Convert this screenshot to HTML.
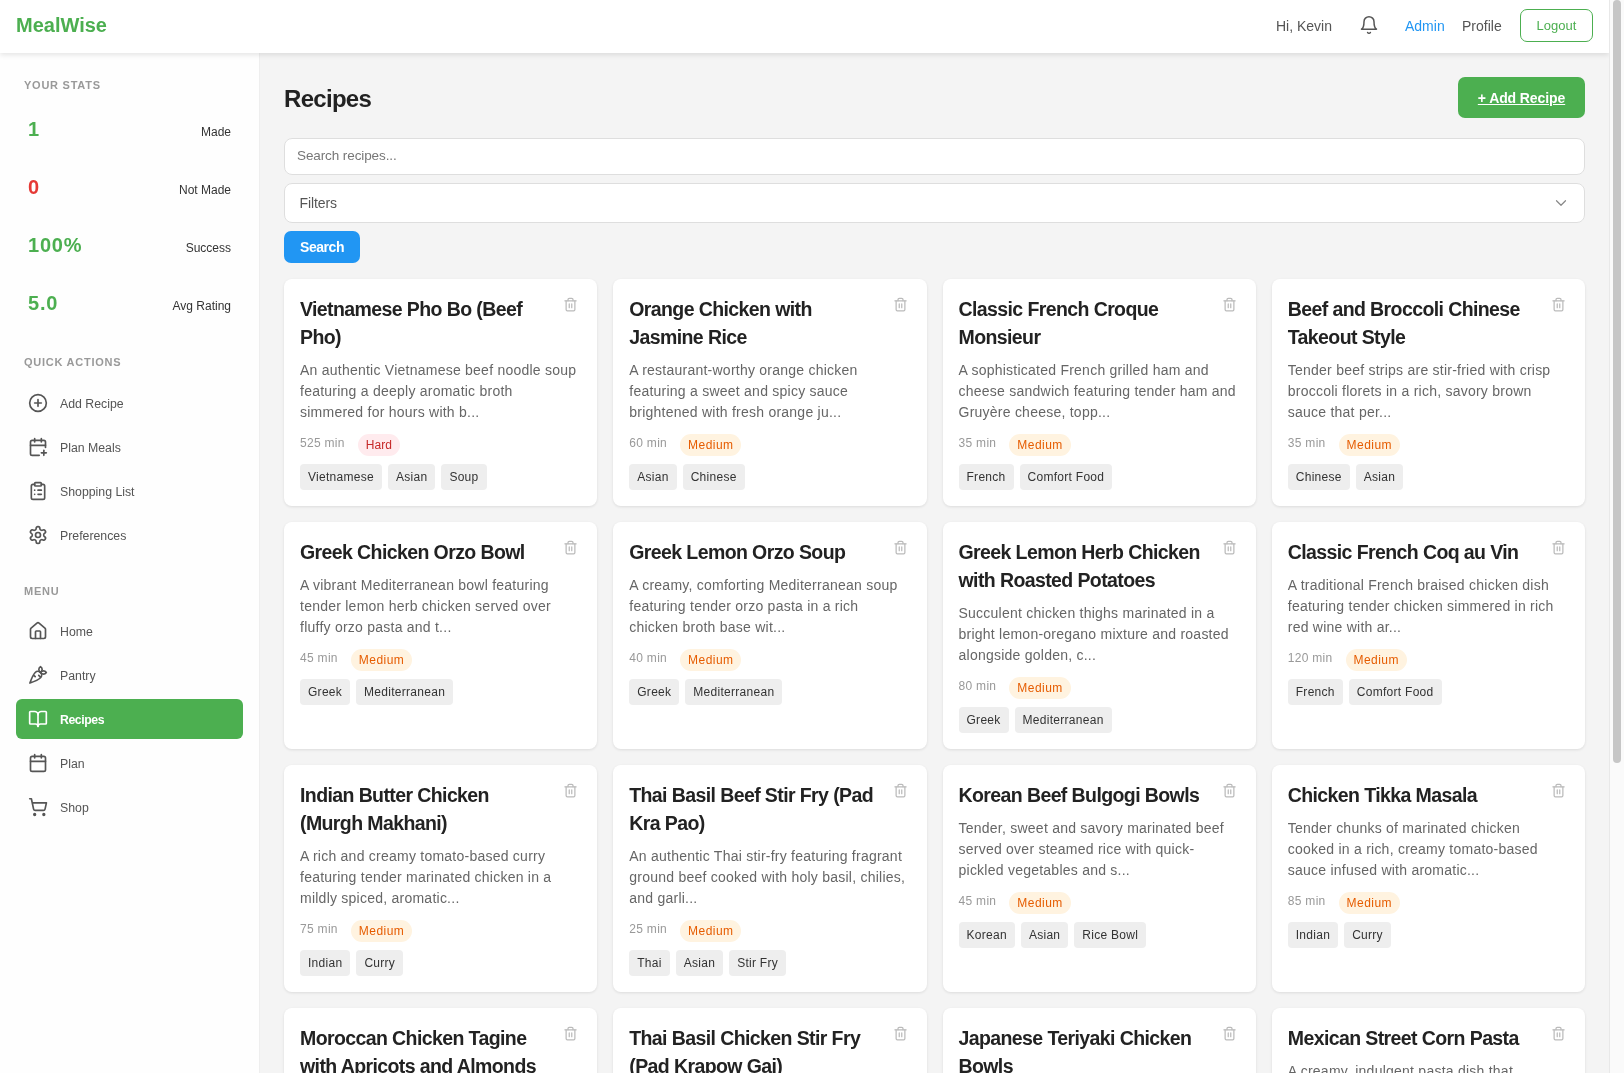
<!DOCTYPE html>
<html><head><meta charset="utf-8"><title>MealWise</title>
<style>
*{box-sizing:border-box;margin:0;padding:0}
html,body{width:1624px;height:1073px;overflow:hidden}
body{font-family:"Liberation Sans",sans-serif;background:#f4f4f4;color:#222;position:relative}
svg{display:block}
.root{position:absolute;left:0;top:0;width:1624px;height:1073px;overflow:hidden;will-change:transform}
.hdr{position:absolute;left:0;top:0;width:1609px;height:53px;background:#fff;box-shadow:0 2px 5px rgba(0,0,0,.1);z-index:5}
.logo{position:absolute;left:16px;top:13px;font-size:20px;line-height:24px;font-weight:700;color:#4caf50}
.ht{position:absolute;top:18px;font-size:14px;line-height:17px;color:#555;white-space:nowrap}
.bell{position:absolute;left:1359px;top:15px}
.logout{position:absolute;left:1520px;top:9px;width:73px;height:32.5px;border:1px solid #4caf50;border-radius:7px;color:#4caf50;font-size:13px;line-height:31px;text-align:center}
.side{position:absolute;left:0;top:53px;width:260px;height:1020px;background:#fefefe;border-right:1px solid #eee}
.sec{position:absolute;left:24px;font-size:11px;line-height:13px;font-weight:700;letter-spacing:.75px;color:#999;white-space:nowrap}
.sv{position:absolute;left:28px;font-size:20px;line-height:24px;font-weight:700;letter-spacing:.8px;color:#4caf50}
.sl{position:absolute;right:28px;font-size:12px;line-height:14px;color:#333;text-align:right;white-space:nowrap}
.it{position:absolute;left:16px;width:227px;height:40px;border-radius:6px;color:#555;font-size:12.3px}
.it svg{position:absolute;left:28px;left:12px;top:10px}
.it span{position:absolute;left:44px;top:14px;line-height:14px;white-space:nowrap}
.it.act{background:#4caf50;color:#fff;font-weight:700;letter-spacing:-.45px}
.scr{position:absolute;left:1609px;top:0;width:15px;height:1073px;background:#fafafa;border-left:1px solid #e8e8e8;z-index:6}
.thumb{position:absolute;left:3px;top:0;width:8px;height:763px;border-radius:4px;background:#c6c6c6}

.ptitle{position:absolute;left:284px;top:85px;font-size:24px;line-height:28px;font-weight:700;letter-spacing:-.7px;color:#222;white-space:nowrap}
.addbtn{position:absolute;left:1458px;top:77px;width:127px;height:41px;border-radius:7px;background:#4caf50;color:#fff;font-size:14px;font-weight:700;line-height:43px;text-align:center;text-decoration:underline;text-underline-offset:1px;letter-spacing:-.1px}
.inp{position:absolute;left:284px;width:1301px;background:#fff;border:1px solid #dedede;border-radius:8px}
.inp span{position:absolute;white-space:nowrap}
.sbtn{position:absolute;left:284px;top:231px;width:76px;height:32px;border-radius:7px;background:#2196f3;color:#fff;font-size:14px;letter-spacing:-.45px;font-weight:700;line-height:33px;text-align:center}
.grid{position:absolute;left:284px;top:279px;width:1301px;display:grid;grid-template-columns:repeat(4,1fr);column-gap:16px;row-gap:16px}
.card{position:relative;height:227px;background:#fff;border-radius:8px;box-shadow:0 1px 3px rgba(0,0,0,.1);padding:16px;overflow:hidden}
.ct{font-size:19.5px;line-height:28px;font-weight:700;letter-spacing:-.6px;color:#222;white-space:nowrap;padding-right:30px}
.cd{margin-top:9px;font-size:14px;line-height:21px;color:#666;letter-spacing:.24px;white-space:nowrap}
.meta{margin-top:11px;display:flex;align-items:flex-start;height:21.6px}
.mins{font-size:12px;line-height:18px;color:#999;letter-spacing:.3px;margin-right:13px;white-space:nowrap}
.badge{height:21.6px;line-height:21.6px;padding:1px 8px 0;border-radius:11px;font-size:12px;letter-spacing:.45px;white-space:nowrap}
.med{background:#fff3e0;color:#e65c00}
.hard{background:#ffebee;color:#c62828;letter-spacing:0}
.tags{margin-top:8.4px;display:flex;gap:6px}
.tag{height:25.7px;line-height:25.7px;padding:1px 8px 0;border-radius:4px;background:#eee;color:#333;font-size:12px;letter-spacing:.28px;white-space:nowrap}
.trash{position:absolute;right:19px;top:18.4px}
</style></head><body>
<div class="root">
<div class="hdr">
  <div class="logo">MealWise</div>
  <div class="ht" style="left:1276px">Hi, Kevin</div>
  <svg class="bell" width="20" height="20" viewBox="0 0 24 24" fill="none" stroke="#555" stroke-width="1.8" stroke-linecap="round" stroke-linejoin="round"><path d="M6 8a6 6 0 0 1 12 0c0 7 3 9 3 9H3s3-2 3-9"/><path d="M10.3 21a1.94 1.94 0 0 0 3.4 0"/></svg>
  <div class="ht" style="left:1405px;color:#2196f3">Admin</div>
  <div class="ht" style="left:1462px">Profile</div>
  <div class="logout">Logout</div>
</div>
<div class="side">
<div class="sec" style="top:25.8px">YOUR STATS</div>
<div class="sv" style="top:64px;color:#4caf50">1</div><div class="sl" style="top:71.6px">Made</div>
<div class="sv" style="top:122px;color:#e53935">0</div><div class="sl" style="top:129.6px">Not Made</div>
<div class="sv" style="top:180px;color:#4caf50">100%</div><div class="sl" style="top:187.6px">Success</div>
<div class="sv" style="top:238px;color:#4caf50">5.0</div><div class="sl" style="top:245.6px">Avg Rating</div>
<div class="sec" style="top:302.6px">QUICK ACTIONS</div>
<div class="it" style="top:330px"><svg width="20" height="20" viewBox="0 0 24 24" fill="none" stroke="#555" stroke-width="2" stroke-linecap="round" stroke-linejoin="round"><circle cx="12" cy="12" r="10"/><path d="M8 12h8"/><path d="M12 8v8"/></svg><span>Add Recipe</span></div>
<div class="it" style="top:374px"><svg width="20" height="20" viewBox="0 0 24 24" fill="none" stroke="#555" stroke-width="2" stroke-linecap="round" stroke-linejoin="round"><path d="M16 19h6"/><path d="M16 2v4"/><path d="M19 16v6"/><path d="M21 12.598V6a2 2 0 0 0-2-2H5a2 2 0 0 0-2 2v14a2 2 0 0 0 2 2h8.5"/><path d="M3 10h18"/><path d="M8 2v4"/></svg><span>Plan Meals</span></div>
<div class="it" style="top:418px"><svg width="20" height="20" viewBox="0 0 24 24" fill="none" stroke="#555" stroke-width="2" stroke-linecap="round" stroke-linejoin="round"><rect width="8" height="4" x="8" y="2" rx="1" ry="1"/><path d="M16 4h2a2 2 0 0 1 2 2v14a2 2 0 0 1-2 2H6a2 2 0 0 1-2-2V6a2 2 0 0 1 2-2h2"/><path d="M12 11h4"/><path d="M12 16h4"/><path d="M8 11h.01"/><path d="M8 16h.01"/></svg><span>Shopping List</span></div>
<div class="it" style="top:462px"><svg width="20" height="20" viewBox="0 0 24 24" fill="none" stroke="#555" stroke-width="2" stroke-linecap="round" stroke-linejoin="round"><path d="M12.22 2h-.44a2 2 0 0 0-2 2v.18a2 2 0 0 1-1 1.73l-.43.25a2 2 0 0 1-2 0l-.15-.08a2 2 0 0 0-2.73.73l-.22.38a2 2 0 0 0 .73 2.73l.15.1a2 2 0 0 1 1 1.72v.51a2 2 0 0 1-1 1.74l-.15.09a2 2 0 0 0-.73 2.73l.22.38a2 2 0 0 0 2.730.73l.15-.08a2 2 0 0 1 2 0l.43.25a2 2 0 0 1 1 1.73V20a2 2 0 0 0 2 2h.44a2 2 0 0 0 2-2v-.18a2 2 0 0 1 1-1.73l.43-.25a2 2 0 0 1 2 0l.15.08a2 2 0 0 0 2.73-.73l.22-.39a2 2 0 0 0-.73-2.73l-.15-.08a2 2 0 0 1-1-1.74v-.5a2 2 0 0 1 1-1.740l.15-.09a2 2 0 0 0 .73-2.73l-.22-.38a2 2 0 0 0-2.73-.73l-.15.08a2 2 0 0 1-2 0l-.43-.25a2 2 0 0 1-1-1.73V4a2 2 0 0 0-2-2z"/><circle cx="12" cy="12" r="3"/></svg><span>Preferences</span></div>
<div class="sec" style="top:531.5px">MENU</div>
<div class="it" style="top:558px"><svg width="20" height="20" viewBox="0 0 24 24" fill="none" stroke="#555" stroke-width="2" stroke-linecap="round" stroke-linejoin="round"><path d="M15 21v-8a1 1 0 0 0-1-1h-4a1 1 0 0 0-1 1v8"/><path d="M3 10a2 2 0 0 1 .709-1.528l7-5.999a2 2 0 0 1 2.582 0l7 5.999A2 2 0 0 1 21 10v9a2 2 0 0 1-2 2H5a2 2 0 0 1-2-2z"/></svg><span>Home</span></div>
<div class="it" style="top:602px"><svg width="20" height="20" viewBox="0 0 24 24" fill="none" stroke="#555" stroke-width="2" stroke-linecap="round" stroke-linejoin="round"><path d="M2.27 21.7s9.87-3.5 12.73-6.36a4.5 4.5 0 0 0-6.36-6.37C5.770 11.84 2.27 21.7 2.27 21.7zM8.64 14l-2.05-2.04M15.34 15l-2.46-2.46"/><path d="M22 9s-1.33-2-3.5-2C16.86 7 15 9 15 9s1.33 2 3.5 2S22 9 22 9z"/><path d="M15 2s-2 1.33-2 3.5S15 9 15 9s2-1.84 2-3.5C17 3.33 15 2 15 2z"/></svg><span>Pantry</span></div>
<div class="it act" style="top:646px"><svg width="20" height="20" viewBox="0 0 24 24" fill="none" stroke="#fff" stroke-width="2" stroke-linecap="round" stroke-linejoin="round"><path d="M12 7v14"/><path d="M3 18a1 1 0 0 1-1-1V4a1 1 0 0 1 1-1h5a4 4 0 0 1 4 4 4 4 0 0 1 4-4h5a1 1 0 0 1 1 1v13a1 1 0 0 1-1 1h-6a3 3 0 0 0-3 3 3 3 0 0 0-3-3z"/></svg><span>Recipes</span></div>
<div class="it" style="top:690px"><svg width="20" height="20" viewBox="0 0 24 24" fill="none" stroke="#555" stroke-width="2" stroke-linecap="round" stroke-linejoin="round"><path d="M8 2v4"/><path d="M16 2v4"/><rect width="18" height="18" x="3" y="4" rx="2"/><path d="M3 10h18"/></svg><span>Plan</span></div>
<div class="it" style="top:734px"><svg width="20" height="20" viewBox="0 0 24 24" fill="none" stroke="#555" stroke-width="2" stroke-linecap="round" stroke-linejoin="round"><circle cx="8" cy="21" r="1"/><circle cx="19" cy="21" r="1"/><path d="M2.05 2.05h2l2.66 12.42a2 2 0 0 0 2 1.58h9.78a2 2 0 0 0 1.95-1.57l1.65-7.43H5.12"/></svg><span>Shop</span></div>
</div>
<div class="ptitle">Recipes</div>
<div class="addbtn">+ Add Recipe</div>
<div class="inp" style="top:138px;height:37px"><span style="left:12px;top:8px;font-size:13.5px;line-height:17px;letter-spacing:-.1px;color:#777">Search recipes...</span></div>
<div class="inp" style="top:183px;height:40px"><span style="left:14.5px;top:11px;font-size:14px;line-height:17px;letter-spacing:-.1px;color:#555">Filters</span><svg style="position:absolute;left:1267px;top:9.6px" width="18" height="18" viewBox="0 0 24 24" fill="none" stroke="#888" stroke-width="1.6" stroke-linecap="round" stroke-linejoin="round"><path d="m6 9 6 6 6-6"/></svg></div>
<div class="sbtn">Search</div>
<div class="grid">
<div class="card"><svg class="trash" width="15" height="15" viewBox="0 0 24 24" fill="none" stroke="#bbb" stroke-width="2" stroke-linecap="round" stroke-linejoin="round"><path d="M3 6h18"/><path d="M19 6v14c0 1-1 2-2 2H7c-1 0-2-1-2-2V6"/><path d="M8 6V4c0-1 1-2 2-2h4c1 0 2 1 2 2v2"/><path d="M10 11v6"/><path d="M14 11v6"/></svg><div class="ct">Vietnamese Pho Bo (Beef<br>Pho)</div><div class="cd">An authentic Vietnamese beef noodle soup<br>featuring a deeply aromatic broth<br>simmered for hours with b...</div><div class="meta"><span class="mins">525 min</span><span class="badge hard">Hard</span></div><div class="tags"><span class="tag">Vietnamese</span><span class="tag">Asian</span><span class="tag">Soup</span></div></div>
<div class="card"><svg class="trash" width="15" height="15" viewBox="0 0 24 24" fill="none" stroke="#bbb" stroke-width="2" stroke-linecap="round" stroke-linejoin="round"><path d="M3 6h18"/><path d="M19 6v14c0 1-1 2-2 2H7c-1 0-2-1-2-2V6"/><path d="M8 6V4c0-1 1-2 2-2h4c1 0 2 1 2 2v2"/><path d="M10 11v6"/><path d="M14 11v6"/></svg><div class="ct">Orange Chicken with<br>Jasmine Rice</div><div class="cd">A restaurant-worthy orange chicken<br>featuring a sweet and spicy sauce<br>brightened with fresh orange ju...</div><div class="meta"><span class="mins">60 min</span><span class="badge med">Medium</span></div><div class="tags"><span class="tag">Asian</span><span class="tag">Chinese</span></div></div>
<div class="card"><svg class="trash" width="15" height="15" viewBox="0 0 24 24" fill="none" stroke="#bbb" stroke-width="2" stroke-linecap="round" stroke-linejoin="round"><path d="M3 6h18"/><path d="M19 6v14c0 1-1 2-2 2H7c-1 0-2-1-2-2V6"/><path d="M8 6V4c0-1 1-2 2-2h4c1 0 2 1 2 2v2"/><path d="M10 11v6"/><path d="M14 11v6"/></svg><div class="ct">Classic French Croque<br>Monsieur</div><div class="cd">A sophisticated French grilled ham and<br>cheese sandwich featuring tender ham and<br>Gruy&egrave;re cheese, topp...</div><div class="meta"><span class="mins">35 min</span><span class="badge med">Medium</span></div><div class="tags"><span class="tag">French</span><span class="tag">Comfort Food</span></div></div>
<div class="card"><svg class="trash" width="15" height="15" viewBox="0 0 24 24" fill="none" stroke="#bbb" stroke-width="2" stroke-linecap="round" stroke-linejoin="round"><path d="M3 6h18"/><path d="M19 6v14c0 1-1 2-2 2H7c-1 0-2-1-2-2V6"/><path d="M8 6V4c0-1 1-2 2-2h4c1 0 2 1 2 2v2"/><path d="M10 11v6"/><path d="M14 11v6"/></svg><div class="ct">Beef and Broccoli Chinese<br>Takeout Style</div><div class="cd">Tender beef strips are stir-fried with crisp<br>broccoli florets in a rich, savory brown<br>sauce that per...</div><div class="meta"><span class="mins">35 min</span><span class="badge med">Medium</span></div><div class="tags"><span class="tag">Chinese</span><span class="tag">Asian</span></div></div>
<div class="card"><svg class="trash" width="15" height="15" viewBox="0 0 24 24" fill="none" stroke="#bbb" stroke-width="2" stroke-linecap="round" stroke-linejoin="round"><path d="M3 6h18"/><path d="M19 6v14c0 1-1 2-2 2H7c-1 0-2-1-2-2V6"/><path d="M8 6V4c0-1 1-2 2-2h4c1 0 2 1 2 2v2"/><path d="M10 11v6"/><path d="M14 11v6"/></svg><div class="ct">Greek Chicken Orzo Bowl</div><div class="cd">A vibrant Mediterranean bowl featuring<br>tender lemon herb chicken served over<br>fluffy orzo pasta and t...</div><div class="meta"><span class="mins">45 min</span><span class="badge med">Medium</span></div><div class="tags"><span class="tag">Greek</span><span class="tag">Mediterranean</span></div></div>
<div class="card"><svg class="trash" width="15" height="15" viewBox="0 0 24 24" fill="none" stroke="#bbb" stroke-width="2" stroke-linecap="round" stroke-linejoin="round"><path d="M3 6h18"/><path d="M19 6v14c0 1-1 2-2 2H7c-1 0-2-1-2-2V6"/><path d="M8 6V4c0-1 1-2 2-2h4c1 0 2 1 2 2v2"/><path d="M10 11v6"/><path d="M14 11v6"/></svg><div class="ct">Greek Lemon Orzo Soup</div><div class="cd">A creamy, comforting Mediterranean soup<br>featuring tender orzo pasta in a rich<br>chicken broth base wit...</div><div class="meta"><span class="mins">40 min</span><span class="badge med">Medium</span></div><div class="tags"><span class="tag">Greek</span><span class="tag">Mediterranean</span></div></div>
<div class="card"><svg class="trash" width="15" height="15" viewBox="0 0 24 24" fill="none" stroke="#bbb" stroke-width="2" stroke-linecap="round" stroke-linejoin="round"><path d="M3 6h18"/><path d="M19 6v14c0 1-1 2-2 2H7c-1 0-2-1-2-2V6"/><path d="M8 6V4c0-1 1-2 2-2h4c1 0 2 1 2 2v2"/><path d="M10 11v6"/><path d="M14 11v6"/></svg><div class="ct">Greek Lemon Herb Chicken<br>with Roasted Potatoes</div><div class="cd">Succulent chicken thighs marinated in a<br>bright lemon-oregano mixture and roasted<br>alongside golden, c...</div><div class="meta"><span class="mins">80 min</span><span class="badge med">Medium</span></div><div class="tags"><span class="tag">Greek</span><span class="tag">Mediterranean</span></div></div>
<div class="card"><svg class="trash" width="15" height="15" viewBox="0 0 24 24" fill="none" stroke="#bbb" stroke-width="2" stroke-linecap="round" stroke-linejoin="round"><path d="M3 6h18"/><path d="M19 6v14c0 1-1 2-2 2H7c-1 0-2-1-2-2V6"/><path d="M8 6V4c0-1 1-2 2-2h4c1 0 2 1 2 2v2"/><path d="M10 11v6"/><path d="M14 11v6"/></svg><div class="ct">Classic French Coq au Vin</div><div class="cd">A traditional French braised chicken dish<br>featuring tender chicken simmered in rich<br>red wine with ar...</div><div class="meta"><span class="mins">120 min</span><span class="badge med">Medium</span></div><div class="tags"><span class="tag">French</span><span class="tag">Comfort Food</span></div></div>
<div class="card"><svg class="trash" width="15" height="15" viewBox="0 0 24 24" fill="none" stroke="#bbb" stroke-width="2" stroke-linecap="round" stroke-linejoin="round"><path d="M3 6h18"/><path d="M19 6v14c0 1-1 2-2 2H7c-1 0-2-1-2-2V6"/><path d="M8 6V4c0-1 1-2 2-2h4c1 0 2 1 2 2v2"/><path d="M10 11v6"/><path d="M14 11v6"/></svg><div class="ct">Indian Butter Chicken<br>(Murgh Makhani)</div><div class="cd">A rich and creamy tomato-based curry<br>featuring tender marinated chicken in a<br>mildly spiced, aromatic...</div><div class="meta"><span class="mins">75 min</span><span class="badge med">Medium</span></div><div class="tags"><span class="tag">Indian</span><span class="tag">Curry</span></div></div>
<div class="card"><svg class="trash" width="15" height="15" viewBox="0 0 24 24" fill="none" stroke="#bbb" stroke-width="2" stroke-linecap="round" stroke-linejoin="round"><path d="M3 6h18"/><path d="M19 6v14c0 1-1 2-2 2H7c-1 0-2-1-2-2V6"/><path d="M8 6V4c0-1 1-2 2-2h4c1 0 2 1 2 2v2"/><path d="M10 11v6"/><path d="M14 11v6"/></svg><div class="ct">Thai Basil Beef Stir Fry (Pad<br>Kra Pao)</div><div class="cd">An authentic Thai stir-fry featuring fragrant<br>ground beef cooked with holy basil, chilies,<br>and garli...</div><div class="meta"><span class="mins">25 min</span><span class="badge med">Medium</span></div><div class="tags"><span class="tag">Thai</span><span class="tag">Asian</span><span class="tag">Stir Fry</span></div></div>
<div class="card"><svg class="trash" width="15" height="15" viewBox="0 0 24 24" fill="none" stroke="#bbb" stroke-width="2" stroke-linecap="round" stroke-linejoin="round"><path d="M3 6h18"/><path d="M19 6v14c0 1-1 2-2 2H7c-1 0-2-1-2-2V6"/><path d="M8 6V4c0-1 1-2 2-2h4c1 0 2 1 2 2v2"/><path d="M10 11v6"/><path d="M14 11v6"/></svg><div class="ct">Korean Beef Bulgogi Bowls</div><div class="cd">Tender, sweet and savory marinated beef<br>served over steamed rice with quick-<br>pickled vegetables and s...</div><div class="meta"><span class="mins">45 min</span><span class="badge med">Medium</span></div><div class="tags"><span class="tag">Korean</span><span class="tag">Asian</span><span class="tag">Rice Bowl</span></div></div>
<div class="card"><svg class="trash" width="15" height="15" viewBox="0 0 24 24" fill="none" stroke="#bbb" stroke-width="2" stroke-linecap="round" stroke-linejoin="round"><path d="M3 6h18"/><path d="M19 6v14c0 1-1 2-2 2H7c-1 0-2-1-2-2V6"/><path d="M8 6V4c0-1 1-2 2-2h4c1 0 2 1 2 2v2"/><path d="M10 11v6"/><path d="M14 11v6"/></svg><div class="ct">Chicken Tikka Masala</div><div class="cd">Tender chunks of marinated chicken<br>cooked in a rich, creamy tomato-based<br>sauce infused with aromatic...</div><div class="meta"><span class="mins">85 min</span><span class="badge med">Medium</span></div><div class="tags"><span class="tag">Indian</span><span class="tag">Curry</span></div></div>
<div class="card"><svg class="trash" width="15" height="15" viewBox="0 0 24 24" fill="none" stroke="#bbb" stroke-width="2" stroke-linecap="round" stroke-linejoin="round"><path d="M3 6h18"/><path d="M19 6v14c0 1-1 2-2 2H7c-1 0-2-1-2-2V6"/><path d="M8 6V4c0-1 1-2 2-2h4c1 0 2 1 2 2v2"/><path d="M10 11v6"/><path d="M14 11v6"/></svg><div class="ct">Moroccan Chicken Tagine<br>with Apricots and Almonds</div><div class="cd">A fragrant North African stew<br>featuring tender chicken<br>with apricots...</div><div class="meta"><span class="mins">90 min</span><span class="badge med">Medium</span></div><div class="tags"><span class="tag">Moroccan</span></div></div>
<div class="card"><svg class="trash" width="15" height="15" viewBox="0 0 24 24" fill="none" stroke="#bbb" stroke-width="2" stroke-linecap="round" stroke-linejoin="round"><path d="M3 6h18"/><path d="M19 6v14c0 1-1 2-2 2H7c-1 0-2-1-2-2V6"/><path d="M8 6V4c0-1 1-2 2-2h4c1 0 2 1 2 2v2"/><path d="M10 11v6"/><path d="M14 11v6"/></svg><div class="ct">Thai Basil Chicken Stir Fry<br>(Pad Krapow Gai)</div><div class="cd">A popular Thai street food<br>featuring minced chicken<br>with basil...</div><div class="meta"><span class="mins">20 min</span><span class="badge med">Medium</span></div><div class="tags"><span class="tag">Thai</span></div></div>
<div class="card"><svg class="trash" width="15" height="15" viewBox="0 0 24 24" fill="none" stroke="#bbb" stroke-width="2" stroke-linecap="round" stroke-linejoin="round"><path d="M3 6h18"/><path d="M19 6v14c0 1-1 2-2 2H7c-1 0-2-1-2-2V6"/><path d="M8 6V4c0-1 1-2 2-2h4c1 0 2 1 2 2v2"/><path d="M10 11v6"/><path d="M14 11v6"/></svg><div class="ct">Japanese Teriyaki Chicken<br>Bowls</div><div class="cd">Juicy chicken glazed in a<br>sweet teriyaki sauce<br>over rice...</div><div class="meta"><span class="mins">30 min</span><span class="badge med">Medium</span></div><div class="tags"><span class="tag">Japanese</span></div></div>
<div class="card"><svg class="trash" width="15" height="15" viewBox="0 0 24 24" fill="none" stroke="#bbb" stroke-width="2" stroke-linecap="round" stroke-linejoin="round"><path d="M3 6h18"/><path d="M19 6v14c0 1-1 2-2 2H7c-1 0-2-1-2-2V6"/><path d="M8 6V4c0-1 1-2 2-2h4c1 0 2 1 2 2v2"/><path d="M10 11v6"/><path d="M14 11v6"/></svg><div class="ct">Mexican Street Corn Pasta</div><div class="cd">A creamy, indulgent pasta dish that<br>combines the flavors of<br>Mexican street corn...</div><div class="meta"><span class="mins">30 min</span><span class="badge med">Medium</span></div><div class="tags"><span class="tag">Mexican</span></div></div>
</div>
<div class="scr"><div class="thumb"></div></div>
</div>
</body></html>
